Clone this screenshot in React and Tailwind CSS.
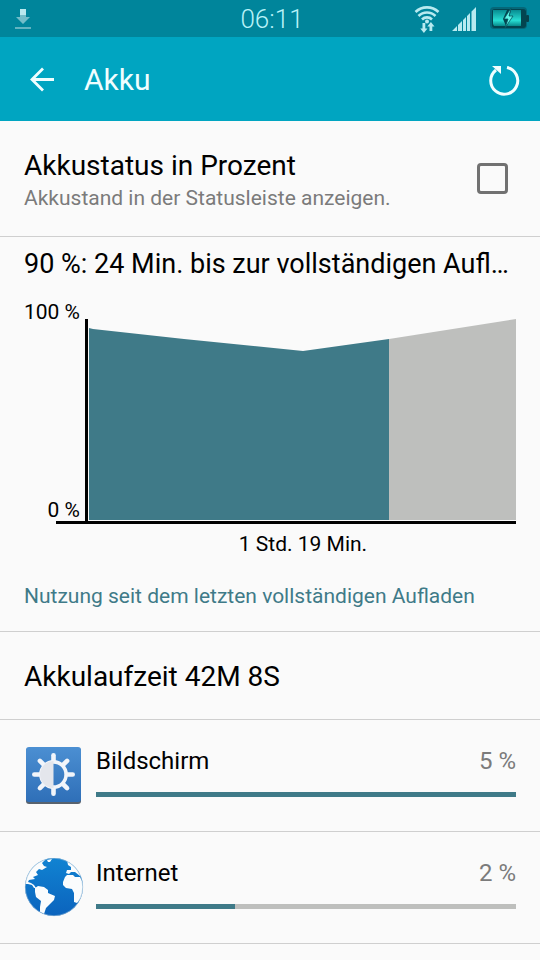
import React from 'react';

const apps = [
  { name: 'Bildschirm', percent: '5 %', bar: 100, Icon: BrightnessIcon },
  { name: 'Internet', percent: '2 %', bar: 33, Icon: GlobeIcon },
];

function BrightnessIcon() {
  return (
    <svg viewBox="0 1 60 60" className="w-15 h-15 shrink-0" aria-hidden="true">
      <defs>
        <linearGradient id="tile" x1="0" y1="0" x2="0" y2="1">
          <stop offset="0" stopColor="#4b8fd2" />
          <stop offset="1" stopColor="#2f6fb8" />
        </linearGradient>
      </defs>
      <rect x="2" y="3" width="55" height="56" rx="3" fill="#58626e" />
      <rect x="2" y="2" width="55" height="55" rx="3" fill="url(#tile)" />
      <g stroke="#f2f5fa" strokeWidth="4.600" strokeLinecap="round">
        {[0, 45, 90, 135, 180, 225, 270, 315].map((angle) => (
          <path key={angle} d="M29.500 10.300v5" transform={`rotate(${angle} 29.500 29.500)`} />
        ))}
      </g>
      <circle cx="29.500" cy="29.500" r="12.600" fill="none" stroke="#f2f5fa" strokeWidth="3.600" />
      <path d="M29.500 16a13.500 13.500 0 0 0 0 27z" fill="#e4e6ec" />
    </svg>
  );
}

function GlobeIcon() {
  return (
    <svg viewBox="0 1 60 60" className="w-15 h-15 shrink-0" aria-hidden="true">
      <defs>
        <linearGradient id="sea" x1="0" y1="0" x2="0" y2="1">
          <stop offset="0" stopColor="#1183d2" />
          <stop offset="1" stopColor="#0b63bd" />
        </linearGradient>
        <clipPath id="globe">
          <circle cx="30" cy="30" r="29" />
        </clipPath>
      </defs>
      <circle cx="30" cy="30" r="29" fill="url(#sea)" />
      <g clipPath="url(#globe)" fill="#fafcfd">
        <path d="M0 0H22L21 3L18 6L20 9L23 10L18 13L15 12L12 15L14 18L9 20L11 22L5 23L4 25L7 26L10 28L12 31L10 31L8 28L4 27L0 27Z" />
        <path d="M23 3L28 2L26 5L24 5Z" />
        <path d="M11 31L14 29L20 30L24 33L24 36L31 39L30 43L26 47L22 51L20 57L16 55L16 50L17 44L12 40L11 35Z" />
        <path d="M39 25L41 20L43 18L49 18L51 20L56 20L59 26L60 33L57 41L53 46L50 45L50 36L48 32L42 31L39 28Z" />
        <path d="M42 16L43 13L47 13L47 10L44 8L43 3L49 6L55 12L59 20L56 19L51 15L47 15L45 17Z" />
      </g>
      <circle cx="30" cy="30" r="28.700" fill="none" stroke="#8fb6d3" strokeWidth="0.600" />
    </svg>
  );
}

function StatusBar() {
  return (
    <div className="grid grid-cols-[1fr_auto_1fr] items-center h-[37px] pl-3 pr-2 bg-[#00859b]">
      <svg viewBox="0 1 20 24" className="w-5 h-6" aria-hidden="true">
        <path d="M8 3h6v7H8z" fill="#b9e8ee" />
        <path d="M4 11h4v-2h6v2h4l-7 7z" fill="#73bdc9" />
        <path d="M3 21h16v2H3z" fill="#62b4c1" />
      </svg>
      <span className="text-[26px] leading-9 font-light text-[#b8f2f8]">06:11</span>
      <div className="flex items-center justify-end gap-3">
        <svg viewBox="0 0 26 28" className="w-[26px] h-7" aria-hidden="true">
          <g fill="none" stroke="#b8eaf0" strokeWidth="2.600">
            <path d="M1.500 7a16.500 16.500 0 0 1 23 0" />
            <path d="M4.500 11a12 12 0 0 1 17 0" />
            <path d="M8 14.500a7 7 0 0 1 10 0" />
          </g>
          <circle cx="13" cy="16.500" r="2" fill="#b8eaf0" />
          <path d="M8.500 18h2.800v5.500h2.200l-3.600 4.500-3.600-4.500h2.200zM15.500 26v-4.500h-2.200l3.600-4.500 3.600 4.500h-2.200V26z" fill="#b8eaf0" />
        </svg>
        <svg viewBox="0 0 24 25" className="w-6 h-[25px]" aria-hidden="true">
          <path d="M0 25l5-5v5zM6 25v-6l4-4v10zM11 25V14l3-3v14zM15 25V10l3-3v18zM19.500 25V5.500L24 1v24z" fill="#b8eaf0" />
        </svg>
        <svg viewBox="-2 0 44 26" className="w-11 h-[26px]" aria-hidden="true">
          <defs>
            <linearGradient id="cell" x1="0" y1="0" x2="0" y2="1">
              <stop offset="0" stopColor="#078c91" />
              <stop offset="0.650" stopColor="#28ddd2" />
              <stop offset="1" stopColor="#07898b" />
            </linearGradient>
          </defs>
          <rect x="0" y="1" width="37" height="22" rx="4" fill="#056779" />
          <rect x="2" y="3" width="34" height="19" rx="3" fill="#034550" />
          <rect x="36" y="9" width="3" height="7" rx="1" fill="#07414b" />
          <path d="M3 4h14l-4 9 3 7H4l-1-2zM21 4h10v16H17z" fill="url(#cell)" />
          <path d="M21 2l-7 11h4l-3 9 8-12h-4z" fill="#5ff5e6" stroke="#045561" strokeWidth="0.800" />
        </svg>
      </div>
    </div>
  );
}

function BatteryChart() {
  return (
    <svg viewBox="0 0 492 270" className="block w-full" role="img" aria-label="Akkuverlauf">
      <path d="M65 38L69 39L160 49L279 61L365 49V230H65Z" fill="#3f7a88" />
      <path d="M365 49L492 29V230H365Z" fill="#bebfbd" />
      <path d="M61 29h3v203h-3zM32 231h460v3H32z" fill="#000" />
      <g className="text-[21px]" fill="#000">
        <text x="56" y="29" textAnchor="end">100 %</text>
        <text x="56" y="227" textAnchor="end">0 %</text>
        <text x="279" y="261" textAnchor="middle">1 Std. 19 Min.</text>
      </g>
    </svg>
  );
}

const App = () => {
  return (
    <div className="min-h-screen bg-[#fafafa] text-black font-[Roboto,sans-serif]">
      <StatusBar />

      <header className="flex items-center justify-between h-[84px] pt-[2px] pl-7 pr-5 bg-[#00a5c1] text-[#f0feff]">
        <div className="flex items-center gap-7">
          <button type="button" aria-label="Zurück">
            <svg viewBox="0 0 28 28" className="block w-7 h-7" fill="none" stroke="currentColor" strokeWidth="2.800">
              <path d="M26 13.500H4M15 2.500l-11 11 11 11" />
            </svg>
          </button>
          <h1 className="text-[30px] leading-9">Akku</h1>
        </div>
        <button type="button" aria-label="Aktualisieren">
          <svg viewBox="0 0 32 32" className="block w-8 h-8" fill="none">
            <path d="M19 3.500A13.500 13.500 0 1 1 8 6" stroke="currentColor" strokeWidth="3" />
            <path d="M4 2h9v8z" fill="currentColor" />
          </svg>
        </button>
      </header>

      <main>
        {/* Percentage setting */}
        <label className="flex items-center justify-between h-29 pl-6 pr-8 border-b border-[#cfcfcf]">
          <span className="pt-[2px]">
            <span className="block text-[28px] leading-9">Akkustatus in Prozent</span>
            <span className="block text-[21px] leading-7 text-[#7b7b7b]">Akkustand in der Statusleiste anzeigen.</span>
          </span>
          <input
            type="checkbox"
            className="appearance-none w-[31px] h-[31px] rounded-sm border-3 border-[#717171] checked:bg-[#3f7a88]"
          />
        </label>

        {/* Battery history */}
        <section className="px-6 pt-[9px] border-b border-[#cfcfcf]">
          <h2 className="text-[27px] leading-9">90 %: 24 Min. bis zur vollständigen Aufl…</h2>
          <div className="pt-2">
            <BatteryChart />
          </div>
          <p className="pt-5 pb-[19px] text-[21px] leading-8 text-[#3f7a88]">Nutzung seit dem letzten vollständigen Aufladen</p>
        </section>

        <h2 className="flex items-center h-22 pt-[2px] px-6 text-[28px] leading-9 border-b border-[#cfcfcf]">Akkulaufzeit 42M 8S</h2>

        <ul>
          {apps.map(({ name, percent, bar, Icon }) => (
            <li key={name} className="flex items-center gap-3 h-28 px-6 border-b border-[#cfcfcf]">
              <Icon />
              <div className="flex-1 pb-[9px]">
                <div className="flex justify-between text-[24px] leading-8">
                  <span>{name}</span>
                  <span className="text-[#7b7b7b]">{percent}</span>
                </div>
                <div className="h-[5px] mt-[15px] bg-[#bebfbd]">
                  <div className="h-full bg-[#3f7a88]" style={{ width: `${bar}%` }} />
                </div>
              </div>
            </li>
          ))}
        </ul>
      </main>
    </div>
  );
};

export default App;
